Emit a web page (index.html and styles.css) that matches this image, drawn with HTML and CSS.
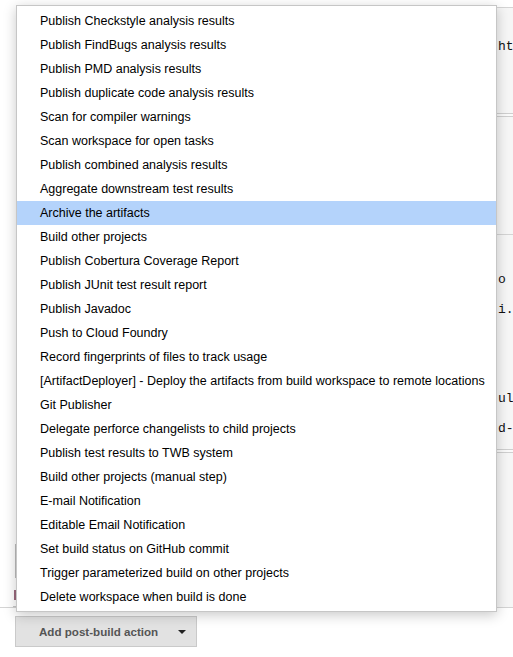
FILE: index.html
```html
<!DOCTYPE html>
<html>
<head>
<meta charset="utf-8">
<link rel="stylesheet" href="styles.css">
</head>
<body>
<div class="page">
  <div class="top-gap"></div>
  <div class="section sec-a">
    <div class="code line-a">ht</div>
  </div>
  <div class="sep-double"></div>
  <div class="section sec-b"></div>
  <div class="section sec-c">
    <div class="code line-c1">o -</div>
    <div class="code line-c2">i.c</div>
    <div class="code line-c3">ull</div>
    <div class="code line-c4">d-r</div>
  </div>
  <div class="sep-double"></div>
  <div class="section sec-d">
    <div class="left-bits">
      <div class="vline"></div>
      <div class="mark"></div>
      <div class="dash"></div>
    </div>
  </div>
  <div class="actions">
    <button class="add-btn"><span>Add post-build action</span><span class="caret"></span></button>
  </div>

  <ul class="menu">
    <li>Publish Checkstyle analysis results</li>
    <li>Publish FindBugs analysis results</li>
    <li>Publish PMD analysis results</li>
    <li>Publish duplicate code analysis results</li>
    <li>Scan for compiler warnings</li>
    <li>Scan workspace for open tasks</li>
    <li>Publish combined analysis results</li>
    <li>Aggregate downstream test results</li>
    <li class="active">Archive the artifacts</li>
    <li>Build other projects</li>
    <li>Publish Cobertura Coverage Report</li>
    <li>Publish JUnit test result report</li>
    <li>Publish Javadoc</li>
    <li>Push to Cloud Foundry</li>
    <li>Record fingerprints of files to track usage</li>
    <li>[ArtifactDeployer] - Deploy the artifacts from build workspace to remote locations</li>
    <li>Git Publisher</li>
    <li>Delegate perforce changelists to child projects</li>
    <li>Publish test results to TWB system</li>
    <li>Build other projects (manual step)</li>
    <li>E-mail Notification</li>
    <li>Editable Email Notification</li>
    <li>Set build status on GitHub commit</li>
    <li>Trigger parameterized build on other projects</li>
    <li>Delete workspace when build is done</li>
  </ul>
</div>
</body>
</html>
```

FILE: styles.css
```css
html, body {
  margin: 0;
  padding: 0;
  background: #ffffff;
}

.page {
  position: relative;
  width: 513px;
  height: 657px;
  overflow: hidden;
  font-family: "Liberation Sans", Arial, sans-serif;
}

.top-gap {
  height: 7px;
}

.section {
  margin-left: 30px;
  background: #f6f6f6;
  border-top: 1px solid #d4d4d4;
  box-sizing: border-box;
  position: relative;
}

.sec-a {
  height: 106px;
  padding-top: 31px;
}

.sep-double {
  margin-left: 30px;
  height: 2px;
  border-top: 1px solid #cfcfcf;
  border-bottom: 1px solid #cfcfcf;
  background: #fafafa;
}

.sec-b {
  height: 117px;
  border-top: none;
}

.sec-c {
  height: 215px;
  padding-top: 37px;
}

.sec-d {
  height: 155px;
  border-top: none;
  border-bottom: 1px solid #d4d4d4;
  margin-left: 0;
  background: linear-gradient(to right, #ffffff 0, #ffffff 30px, #f6f6f6 30px);
}

.code {
  font-family: "Liberation Mono", "Courier New", monospace;
  font-size: 13px;
  line-height: 15px;
  color: #111;
  padding-left: 468px;
  white-space: nowrap;
}

.line-c2 { margin-top: 15px; }
.line-c3 { margin-top: 74px; }
.line-c4 { margin-top: 15px; }

.left-bits {
  padding-left: 14px;
  padding-top: 91px;
}

.vline {
  width: 1px;
  height: 34px;
  background: #bdbdbd;
  margin-left: 1px;
}

.mark {
  width: 2px;
  height: 10px;
  margin-top: 12px;
  background: #9b6a7e;
}

.dash {
  width: 4px;
  height: 1px;
  margin-top: 6px;
  margin-left: -1px;
  background: #c8c8c8;
}

.actions {
  padding: 8px 0 0 15px;
}

.add-btn {
  display: flex;
  align-items: center;
  justify-content: space-between;
  box-sizing: border-box;
  width: 182px;
  height: 31px;
  padding: 0 10px 0 23px;
  margin: 0;
  background: #e2e2e2;
  border: 1px solid #cacaca;
  border-radius: 0;
  font-family: "Liberation Sans", Arial, sans-serif;
  font-weight: bold;
  font-size: 11.6px;
  color: #555555;
}

.caret {
  width: 0;
  height: 0;
  border-left: 4px solid transparent;
  border-right: 4px solid transparent;
  border-top: 4px solid #222;
}

.menu {
  position: absolute;
  left: 16px;
  top: 5px;
  width: 481px;
  box-sizing: border-box;
  margin: 0;
  padding: 3px 0 2px;
  list-style: none;
  background: #ffffff;
  border: 1px solid #c6c6c6;
  box-shadow: 0 3px 12px rgba(0, 0, 0, 0.22);
}

.menu li {
  height: 24px;
  line-height: 24px;
  padding-left: 23px;
  font-size: 12.5px;
  color: #000;
  white-space: nowrap;
}

.menu li.active {
  background: #b4d3fb;
}
```
